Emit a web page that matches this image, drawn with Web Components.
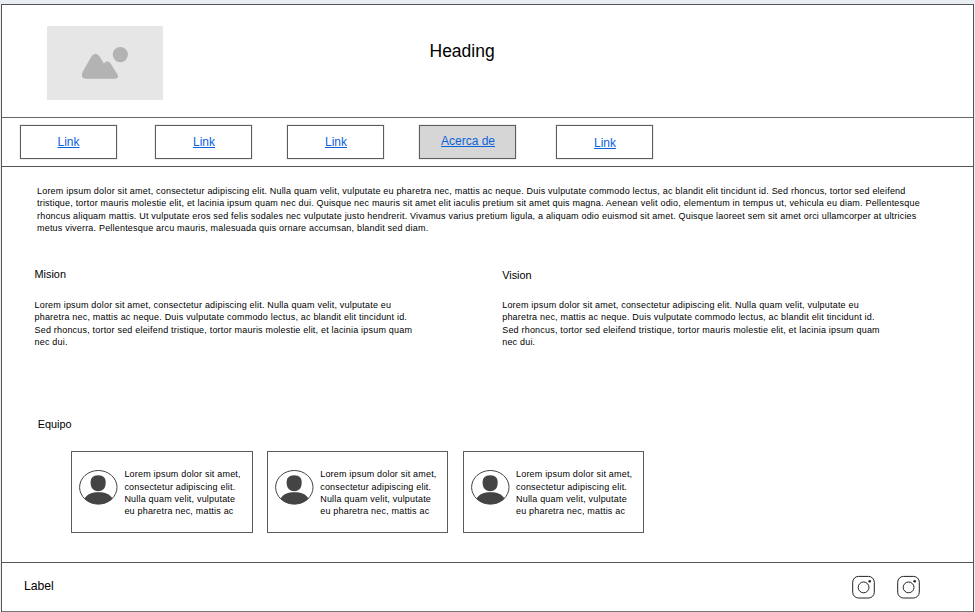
<!DOCTYPE html>
<html lang="es">
<head>
<meta charset="utf-8">
<title>Acerca de</title>
<style>
html,body{margin:0;height:612px;overflow:hidden;background:#e9eef4}
body{font-family:"Liberation Sans",Arial,sans-serif;color:#000}
</style>
</head>
<body>
<about-page></about-page>
<script>
const define = (name, html) => customElements.define(name, class extends HTMLElement {
  constructor() {
    super();
    this.attachShadow({ mode: 'open' }).innerHTML = html;
  }
});

define('image-placeholder', `
<style>:host{display:block;width:116px;height:74px;background:#e6e6e6}svg{display:block}</style>
<svg width="116" height="74" viewBox="0 0 116 74" fill="#b3b3b3">
<circle cx="73.3" cy="28.6" r="7.6"/>
<path d="M35.6 46 L44.4 30.5 Q48.6 25 52.6 30.5 L57 37.4 Q60.2 33 63.6 37.4 L70.4 48.2 Q72.6 52.6 67.6 52.8 H39 Q33 52.4 35.6 46Z"/>
</svg>`);

define('nav-link', `
<style>
:host{display:grid;place-items:center;box-sizing:border-box;width:97px;height:34px;border:1px solid #5c5c5c;background:#fff;box-shadow:0 0 0 .5px #ddd}
:host([active]){background:#d6d6d6}
a{font-size:12px;line-height:16px;color:#0b62dc;text-decoration:underline;text-decoration-thickness:1px;text-underline-offset:1px;padding:var(--nudge,0)}
</style>
<a href="#"><slot></slot></a>`);

define('text-lines', `
<style>:host{display:block;font-size:9px;line-height:12.25px;letter-spacing:.196px}slot{white-space:pre}</style><slot></slot>`);

define('section-title', `
<style>:host{display:block;font-size:10.9px;line-height:14px}</style><slot></slot>`);

define('user-avatar', `
<style>:host{display:block;width:39px;height:35px}svg{display:block}</style>
<svg width="39" height="35" viewBox="0 0 39 35">
<path d="M5.6 28.6 C8 24 13 22.3 19.5 22.3 S31 24 33.4 28.6 C30 32.6 25 34.3 19.5 34.3 S9 32.6 5.6 28.6Z" fill="#444"/>
<path d="M19.2 5.2 C24.5 5.2 26.7 8.2 26.7 12.5 C26.7 17.6 24.3 21.2 19.2 21.2 S11.6 17.6 11.6 12.5 C11.6 8.2 13.9 5.2 19.2 5.2Z" fill="#444"/>
<ellipse cx="19.3" cy="17.3" rx="18.7" ry="16.8" fill="none" stroke="#444"/>
</svg>`);

define('team-card', `
<style>
:host{display:flex;box-sizing:border-box;width:181.5px;height:82px;border:1px solid #5c5c5c;background:#fff;padding:16px 0 0 7px;gap:6.4px}
user-avatar{margin-top:2px}
</style>
<user-avatar></user-avatar><text-lines><slot></slot></text-lines>`);

define('insta-icon', `
<style>:host{display:block;width:24px;height:24px}svg{display:block}</style>
<svg width="24" height="24" viewBox="0 0 24 24" fill="none" stroke="#222" stroke-width="1">
<rect x=".7" y="1.4" width="21.6" height="21.6" rx="5.8"/><circle cx="11.6" cy="12.4" r="5.4"/><circle cx="17.7" cy="6.3" r="1.3" fill="#222" stroke="none"/>
</svg>`);

define('page-header', `
<style>
:host{display:grid;grid-template-columns:382px 1fr;height:112px;border-top:1px solid #555;padding-left:45px}
image-placeholder{margin-top:21px}
h1{margin:35px 0 0 .5px;font-size:17.5px;line-height:22px;font-weight:400}
</style>
<image-placeholder></image-placeholder><h1>Heading</h1>`);

define('page-nav', `
<style>
:host{display:flex;height:48px;border-top:1px solid #666;padding-left:18px}
nav{display:grid;grid-template-columns:135px 132px 132px 137px 97px;padding-top:7px}
</style>
<nav><nav-link>Link</nav-link><nav-link style="--nudge:0 0 0 1px">Link</nav-link><nav-link style="--nudge:0 0 0 1px">Link</nav-link><nav-link active style="--nudge:0 0 2px 1px">Acerca de</nav-link><nav-link style="--nudge:1px 0 0 1px">Link</nav-link></nav>`);

define('page-main', `
<style>
:host{display:block;box-sizing:border-box;height:396px;border-top:1px solid #555;padding:18px 0 0 32.5px}
.intro{margin-left:2.5px}
.cols{display:grid;grid-template-columns:467.7px 1fr;margin-top:33px}
.cols text-lines{margin-top:18px}
.vision section-title{margin-top:1px}
.vision text-lines{margin-top:17px}
.team-title{margin:69.4px 0 0 3.2px}
.team{display:flex;gap:14.3px;margin:20px 0 0 36.5px}
</style>
<text-lines class="intro">Lorem ipsum dolor sit amet, consectetur adipiscing elit. Nulla quam velit, vulputate eu pharetra nec, mattis ac neque. Duis vulputate commodo lectus, ac blandit elit tincidunt id. Sed rhoncus, tortor sed eleifend
tristique, tortor mauris molestie elit, et lacinia ipsum quam nec dui. Quisque nec mauris sit amet elit iaculis pretium sit amet quis magna. Aenean velit odio, elementum in tempus ut, vehicula eu diam. Pellentesque
rhoncus aliquam mattis. Ut vulputate eros sed felis sodales nec vulputate justo hendrerit. Vivamus varius pretium ligula, a aliquam odio euismod sit amet. Quisque laoreet sem sit amet orci ullamcorper at ultricies
metus viverra. Pellentesque arcu mauris, malesuada quis ornare accumsan, blandit sed diam.</text-lines>
<div class="cols">
${['Mision', 'Vision'].map(t => `<section class="${t.toLowerCase()}"><section-title>${t}</section-title><text-lines>Lorem ipsum dolor sit amet, consectetur adipiscing elit. Nulla quam velit, vulputate eu
pharetra nec, mattis ac neque. Duis vulputate commodo lectus, ac blandit elit tincidunt id.
Sed rhoncus, tortor sed eleifend tristique, tortor mauris molestie elit, et lacinia ipsum quam
nec dui.</text-lines></section>`).join('')}
</div>
<section-title class="team-title">Equipo</section-title>
<div class="team">${`<team-card>Lorem ipsum dolor sit amet,
consectetur adipiscing elit.
Nulla quam velit, vulputate
eu pharetra nec, mattis ac</team-card>`.repeat(3)}</div>`);

define('page-footer', `
<style>
:host{display:flex;justify-content:space-between;box-sizing:border-box;height:50px;border-top:1px solid #555;border-bottom:1px solid #777;padding:12px 52.5px 0 22px}
.label{font-size:12.2px;line-height:22px}
.social{display:flex;gap:21px}
</style>
<span class="label">Label</span><div class="social"><insta-icon></insta-icon><insta-icon></insta-icon></div>`);

define('about-page', `
<style>
:host{display:block;box-sizing:border-box;width:973px;height:608px;margin:4px 0 0 1px;background:#fff;border:solid #555;border-width:0 1px}
</style>
<page-header></page-header><page-nav></page-nav><page-main></page-main><page-footer></page-footer>`);
</script>
</body>
</html>
